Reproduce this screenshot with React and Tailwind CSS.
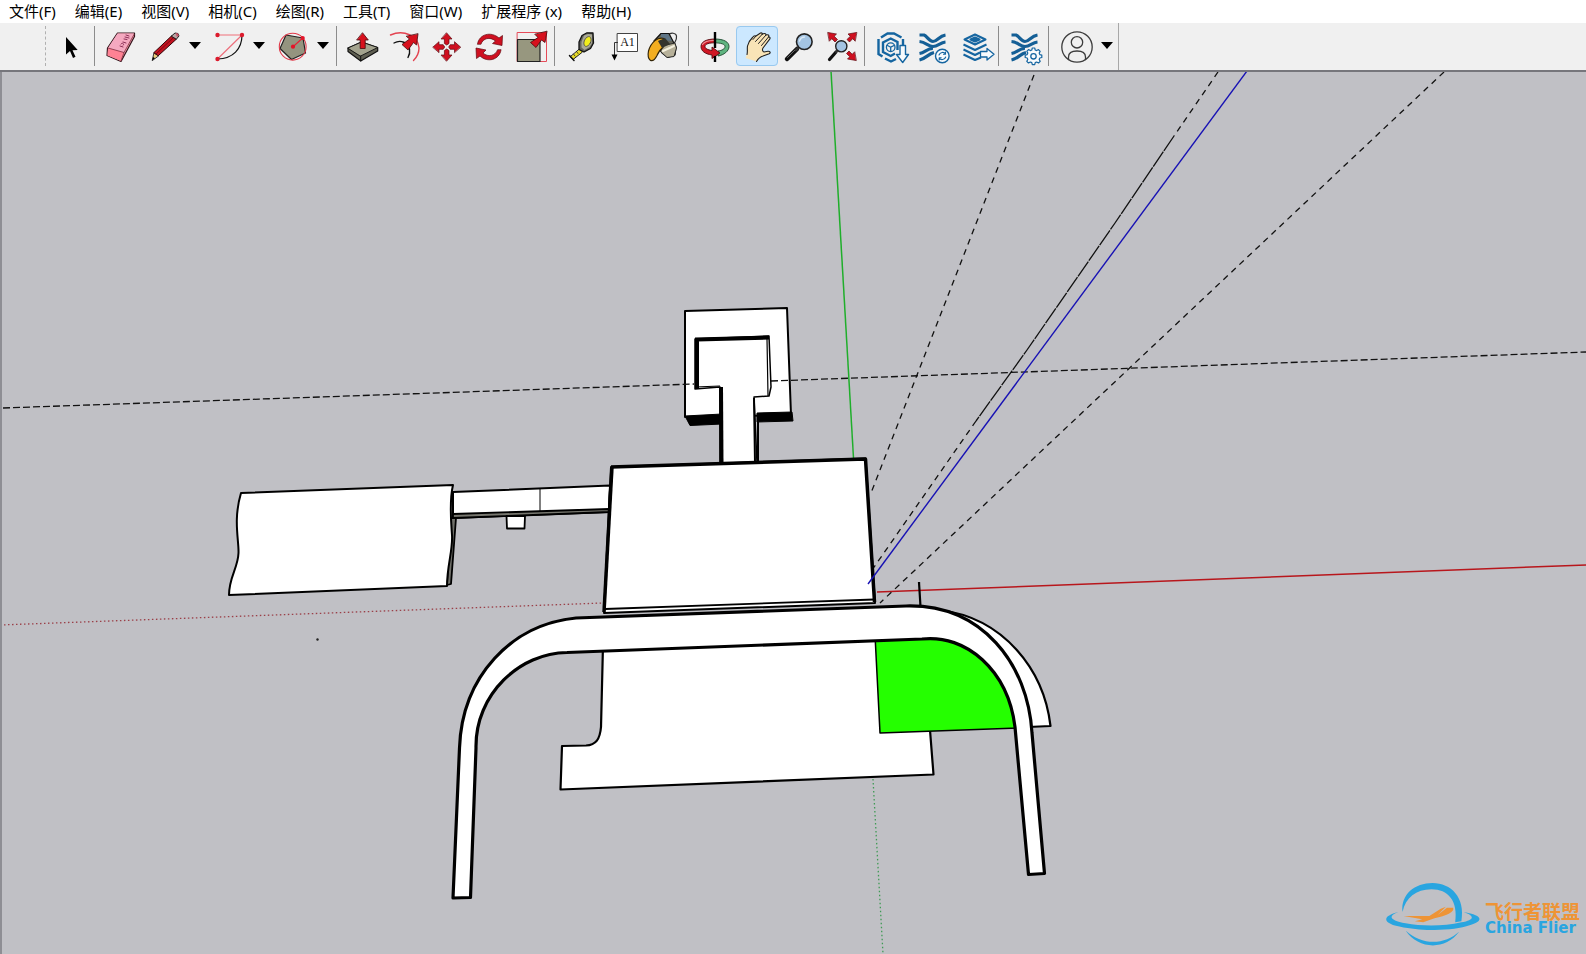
import React from "react";

const menus = [
  "文件(F)",
  "编辑(E)",
  "视图(V)",
  "相机(C)",
  "绘图(R)",
  "工具(T)",
  "窗口(W)",
  "扩展程序 (x)",
  "帮助(H)",
];

// Every toolbar icon is drawn on the same 42x40 grid
function Icon({ children }) {
  return (
    <svg
      viewBox="0 0 42 40"
      className="block h-10 w-[42px]"
      fill="none"
      strokeLinejoin="round"
      strokeLinecap="round"
      aria-hidden="true"
    >
      {children}
    </svg>
  );
}

function SelectIcon() {
  return (
    <Icon>
      <path d="M16 11v17.500l4-3.500 3 7 2.500-1.200-3-6.600 5.200-.2z" fill="#000" />
    </Icon>
  );
}

function EraserIcon() {
  return (
    <Icon>
      <path d="M17.500 7 34.500 7 34.500 10.500 21 35.500 7 29.500 7.500 22z" fill="#f9a0ae" stroke="#33151c" strokeWidth="1.200" />
      <path d="M8 22 17.500 7.500 34 7.500 24 26.500z" fill="#f5a9c0" />
      <path d="M8 22 24 26.500 21 35 7.500 29.500z" fill="#ff8294" />
      <path d="M8 22 24 26.500 34 8.500M24 26.500 21 35" stroke="#7c2e40" strokeWidth=".8" />
      <path d="M20 20l3 1M21 18c1-2 4 0 2 1.500M23 16l3 1M24 13l3 .5M25 11l4 1M26 9l3 1" stroke="#8d3158" strokeWidth="1" />
    </Icon>
  );
}

function PencilIcon() {
  return (
    <Icon>
      <path d="M10.300 34.300 12 26.500 16.500 29.500z" fill="#e8cf7c" stroke="#222" strokeWidth=".9" />
      <path d="M10.300 34.300 11 31 13 32.200z" fill="#000" />
      <path d="M12 26.500 30 9.500 34.500 13 16.500 29.500z" fill="#c1121f" stroke="#320509" strokeWidth="1" />
      <path d="M14 28 32 11" stroke="#7d0711" strokeWidth="1" />
      <path d="M29.500 10 33 7 36 7.500 37 10 34.500 13z" fill="#b9a5a5" stroke="#222" strokeWidth="1" />
      <path d="M33.500 7 36 7.500 36.800 9.500 35 11z" fill="#c95468" />
    </Icon>
  );
}

function ArcIcon() {
  return (
    <Icon>
      <path d="M11.500 9H36" stroke="#f0707b" strokeWidth="1.200" />
      <path d="M36 9 11.500 33" stroke="#ec6f7c" strokeWidth="1.200" />
      <path d="M36 9C36 23 27 32.500 11.500 33" stroke="#111" strokeWidth="1.200" />
      <circle cx="11.500" cy="9" r="2.200" fill="#dc1b2d" />
      <circle cx="36" cy="9" r="2.200" fill="#dc1b2d" />
      <circle cx="11.500" cy="33" r="2.200" fill="#dc1b2d" />
    </Icon>
  );
}

function PolygonIcon() {
  return (
    <Icon>
      <path d="M16 9 33 12 35.500 27 21.500 33.500 10 22.500z" fill="#94947f" stroke="#222" strokeWidth="1.200" />
      <circle cx="22.700" cy="20.700" r="13.400" stroke="#e03a49" strokeWidth="1.100" />
      <path d="M23 20.700 32.700 12" stroke="#e82034" strokeWidth="1.200" />
      <circle cx="23" cy="20.700" r="2.100" fill="#e31429" />
      <circle cx="32.700" cy="12" r="2.100" fill="#e31429" />
    </Icon>
  );
}

function PushPullIcon() {
  return (
    <Icon>
      <path d="M6 22 19.500 16 35.700 21.500 35.700 25 18.700 35 6 25.500z" fill="#5f5f52" stroke="#111" strokeWidth="1.200" />
      <path d="M6 22 19.500 16 35.700 21.500 18.700 30z" fill="#a3a38e" stroke="#111" strokeWidth=".9" />
      <path d="M18.700 30v5" stroke="#111" />
      <path d="M20.700 7 26.300 14 23.200 14 23.200 22.500 18.200 22.500 18.200 14 15 14z" fill="#d7101d" stroke="#47070b" strokeWidth=".8" />
    </Icon>
  );
}

function OffsetIcon() {
  return (
    <Icon>
      <path d="M6.500 9C20 3 34 10 35 22c0 5-2 9-5.500 12.500" stroke="#e34350" strokeWidth="1.400" />
      <path d="M10 17c7-4 14 0 15.500 6 .5 3 0 6-1.500 8.500" stroke="#111" strokeWidth="1.400" />
      <path d="M34 8 32.500 19 29.500 16.500 24 24 18 18.500 25.500 13 22.500 10.500z" fill="#d7101d" stroke="#47070b" strokeWidth=".8" />
    </Icon>
  );
}

function MoveIcon() {
  return (
    <Icon>
      <g fill="#cf1020" stroke="#5e0910" strokeWidth=".7">
        <path d="M20.700 7 26 13 23 13 23 17.500 20.700 19 18.400 17.500 18.400 13 15.400 13z" />
        <path d="M20.700 35 26 29 23 29 23 24.500 20.700 23 18.400 24.500 18.400 29 15.400 29z" />
        <path d="M7 21 13 15.700 13 18.700 17.200 18.700 18.700 21 17.200 23.300 13 23.300 13 26.300z" />
        <path d="M34.500 21 28.500 15.700 28.500 18.700 24.200 18.700 22.700 21 24.200 23.300 28.500 23.300 28.500 26.300z" />
      </g>
    </Icon>
  );
}

function RotateIcon() {
  return (
    <Icon>
      <g fill="#cf1020" stroke="#5e0910" strokeWidth=".7">
        <path d="M9.500 18C11 8 23 5 31 12L34.500 9.500 34 19.500 24.500 17.500 27.500 15C22 10.500 15 12 13 18z" />
        <path d="M33 24C31.500 34 19.500 37 12 30L8.500 32.500 8 22 18 24 15 27C20 31.500 27.500 30 29.500 24z" />
      </g>
    </Icon>
  );
}

function ScaleIcon() {
  return (
    <Icon>
      <path d="M7.500 6.500H36.500V35.500H7.500z" stroke="#e64b59" strokeWidth="1" />
      <path d="M7.500 13.500H30V35.500H7.500z" fill="#97977f" stroke="#222" strokeWidth="1.200" />
      <path d="M37 5.500 35 16.500 31.500 14 26 21.500 20.500 16.500 28 11.500 25 8.500z" fill="#d7101d" stroke="#47070b" strokeWidth=".8" />
    </Icon>
  );
}

function TapeIcon() {
  return (
    <Icon>
      <path d="M20 23 22.500 26 13 33.500 10.500 31z" fill="#e9dc27" stroke="#222" strokeWidth="1" />
      <path d="M9.500 29.500 14 34.500" stroke="#111" strokeWidth="1.500" />
      <path d="M16.500 25.500l1.500 2M13.500 28l1.500 2" stroke="#222" strokeWidth=".8" />
      <path d="M22 9.500 27 6.800 33 7 33.500 17 30.500 22.500 24 26 19 23.500 19 16z" fill="#66665d" stroke="#111" strokeWidth="1.300" />
      <path d="M24 9.500 28 8 32 8.500 32 17 29.500 21 24.500 24 21.500 21.500 21.500 16z" fill="#aaa997" />
      <ellipse cx="27.500" cy="15.500" rx="3.200" ry="5.200" transform="rotate(25 27.500 15.500)" fill="#f2ee1c" stroke="#444" strokeWidth=".7" />
    </Icon>
  );
}

function TextIcon() {
  return (
    <Icon>
      <path d="M15.500 7.500H35.500V25.500H15.500z" fill="#fff" stroke="#444" strokeWidth="1" />
      <path d="M15.500 16.500H12.500V30" stroke="#333" strokeWidth="1" strokeLinejoin="miter" />
      <path d="M9.500 28.500H15.500L12.500 34.500z" fill="#000" />
      <text x="25.500" y="19.500" textAnchor="middle" fontSize="12" fill="#111" fontFamily="'Liberation Serif', serif">
        A1
      </text>
    </Icon>
  );
}

function PaintIcon() {
  return (
    <Icon>
      <path d="M24 9c3-3 8-2 8.500 1 .5 3-1 5-2 7" stroke="#333" strokeWidth="1.200" />
      <path d="M10 15 17 7.500 25 7.500 32 21 31 29 24 31.500 18 27z" fill="#67675b" stroke="#111" strokeWidth="1.200" />
      <path d="M17 8 24 8 28 15 17 14z" fill="#5f7586" />
      <path d="M18 20 31 17 32.500 22 30 30.500 23 31.500 17 26z" fill="#b7b19a" stroke="#222" strokeWidth=".9" />
      <path d="M19 25 30 20" stroke="#f5f1df" strokeWidth="2" />
      <path d="M20 12.500C14 10.500 7 16 4.500 25c-.8 4 0 8 2 9.500 3 1 5-2 6.500-5 1.500-3.500 3-6 6-8z" fill="#f3ae20" stroke="#322407" strokeWidth="1.200" />
      <path d="M14 15 21 12 26 18 18 22z" fill="#34342d" />
    </Icon>
  );
}

function OrbitIcon() {
  return (
    <Icon>
      <path d="M21 13c9 0 14 3 14 7.500S30 29 24 30v-5c4-.5 7-2 7-4.500s-4-3.500-10-3.700z" fill="#5fb480" stroke="#17462a" strokeWidth=".9" />
      <path d="M21 13C12 13 7 16 7 20.500c0 4.500 4 7.500 11 8.500V32.500l8-5.500-8-6v3.500c-4.500-.7-7-2-7-4 0-2.500 4-3.700 10-3.700z" fill="#cf1724" stroke="#520b11" strokeWidth=".9" />
      <path d="M8.500 18.500c2-3 5-4 11-4.200" stroke="#f08b92" strokeWidth="1.200" />
      <path d="M21 6V22M21 30V36" stroke="#000" strokeWidth="2.400" strokeLinecap="butt" />
    </Icon>
  );
}

function HandIcon() {
  return (
    <Icon>
      <path
        d="M9.500 32C12 28 11 24 11.500 20c.5-3 2.500-6 5-8.500 1-1.500 2.500-2 3.500-1.500l4.500-3c1.500-.5 2 .5 1.500 1.500 1.500-1.500 4-1.500 4 .5 2-.8 3.500.2 2.500 2 1.500-.2 2 1 1.200 2.200L27 22c-1 1.500-.5 3.500 1 4l4-.7c2-.2 3 1.500 1.200 2.500L27 30c-3 .7-5 3-6.500 5.500z"
        fill="#f9e4b7"
      />
      <path
        d="M11 28.500c.8-3 0-5.500.5-8.500.5-3 2.500-6 5-8.500 1-1.500 2.500-2 3.500-1.500l4.500-3c1.500-.5 2 .5 1.500 1.500 1.500-1.500 4-1.500 4 .5 2-.8 3.500.2 2.500 2 1.500-.2 2 1 1.200 2.200L27 22c-1 1.500-.5 3.500 1 4l4-.7c2-.2 3 1.500 1.200 2.500L27 30c-3 .7-5 3-6.500 5.500"
        stroke="#222"
        strokeWidth="1.100"
      />
      <path d="M26 8.500 19.500 15.500M30 9 22.500 17.500M32.500 11 25.500 19.500M20 10l-3 3.500" stroke="#222" strokeWidth="1" />
    </Icon>
  );
}

function ZoomIcon() {
  return (
    <Icon>
      <path d="M9 33 19 23" stroke="#111" strokeWidth="4.500" />
      <path d="M9.500 31.500 17 24" stroke="#666" strokeWidth="1" />
      <path d="M18 24 21 21" stroke="#333" strokeWidth="2.500" />
      <circle cx="26.300" cy="15.700" r="7.800" fill="#a4c4e2" stroke="#222" strokeWidth="1.600" />
      <path d="M21.500 15c1-3 3-4 5-4" stroke="#dbeaf6" strokeWidth="1.500" />
    </Icon>
  );
}

function ZoomExtentsIcon() {
  return (
    <Icon>
      <path d="M9.500 33.500 16 26" stroke="#111" strokeWidth="3.200" />
      <path d="M16 26 18 24" stroke="#333" strokeWidth="2" />
      <circle cx="21.300" cy="20.300" r="5.600" fill="#a4c4e2" stroke="#222" strokeWidth="1.400" />
      <g fill="#cf1020" stroke="#5e0910" strokeWidth=".7">
        <path d="M8 6.500 16.500 8 14.200 10.300 17.500 13.500 15 16 11.800 12.700 9.500 15z" />
        <path d="M36.500 6.500 28 8 30.300 10.300 27 13.500 29.500 16 32.700 12.700 35 15z" />
        <path d="M36 34.500 27.500 33 29.800 30.700 26.500 27.500 29 25 32.200 28.300 34.500 26z" />
      </g>
    </Icon>
  );
}

function WarehouseIcon() {
  return (
    <Icon>
      <g stroke="#1565a0" strokeWidth="2.400" strokeLinecap="butt" strokeLinejoin="miter">
        <path d="M11 11.500 17.500 7.500H24L31.500 11.500" />
        <path d="M8.500 13V28L12.500 30.500" />
        <path d="M33 13V20" />
        <path d="M26 33 21 35.500 15 32.500" />
        <path d="M27.500 24V16L20.700 12.500 13 16.500V26L20.700 30 25 27.500" />
      </g>
      <circle cx="20.700" cy="21.200" r="4.300" stroke="#1565a0" strokeWidth="1.300" />
      <path d="M17.500 19.500 20.700 21.200 24 19.500M20.700 21.200V25" stroke="#1565a0" strokeWidth="1.300" />
      <path d="M30 19.500H35.500V28.500H38.500L32.700 36.500 26.500 28.500H30z" fill="#f8fbfd" stroke="#1565a0" strokeWidth="1.400" />
    </Icon>
  );
}

// Woven strands shared by the update and settings tools
function Strands() {
  return (
    <g stroke="#145f96" strokeWidth="3.200" strokeLinecap="butt">
      <path d="M7.500 9H12C15 10 17 15.500 21 15.500S27 10 33.500 9" />
      <path d="M7.500 15.500C14 16 16 20.500 21 20.500S28 16.500 33.500 16" />
      <path d="M7.500 27.500C13 26.500 16 22 21 22.500" />
      <path d="M7.500 34C14 32.500 16 28 22 26.500" />
    </g>
  );
}

function UpdateIcon() {
  return (
    <Icon>
      <Strands />
      <circle cx="30.300" cy="30" r="6.800" fill="#f8fbfd" stroke="#1565a0" strokeWidth="1.400" />
      <path d="M27 29c1-3 5-3.500 6.500-1M33.700 31c-1 3-5 3.500-6.500 1M33.500 26v2.200h-2M27.200 34v-2.200h2" stroke="#1565a0" strokeWidth="1.100" />
    </Icon>
  );
}

function LayersIcon() {
  return (
    <Icon>
      <g stroke="#1565a0" strokeWidth="2" strokeLinecap="butt">
        <path d="M10.500 13.500 21 8.500 31.500 13.500 21 18.500z" />
        <path d="M16.500 13.500 21 11.500 25.500 13.500 21 15.500z" fill="#1565a0" />
        <path d="M9.500 18.500 21 24 32.500 18.500" />
        <path d="M9.500 23.500 21 29 26 26.500" />
        <path d="M9.500 28.500 21 34 27 31.500" />
      </g>
      <path d="M26.500 25.500H33V22.500L40 28.300 33 34V31H26.500z" fill="#f8fbfd" stroke="#1565a0" strokeWidth="1.300" />
    </Icon>
  );
}

function ExtensionSettingsIcon() {
  return (
    <Icon>
      <Strands />
      <path
        d="M28.300 22h2.400l.5 2 1.500.6 1.800-1 1.700 1.700-1 1.800.6 1.500 2 .5v2.400l-2 .5-.6 1.500 1 1.800-1.700 1.700-1.800-1-1.500.6-.5 2h-2.400l-.5-2-1.500-.6-1.800 1-1.700-1.700 1-1.800-.6-1.500-2-.5v-2.400l2-.5.6-1.500-1-1.800 1.700-1.700 1.800 1 1.500-.6z"
        fill="#f8fbfd"
        stroke="#1565a0"
        strokeWidth="1.200"
      />
      <circle cx="29.500" cy="30.300" r="2.700" stroke="#1565a0" strokeWidth="1.300" />
    </Icon>
  );
}

function AccountIcon() {
  return (
    <Icon>
      <g stroke="#3c3c3c" strokeWidth="1.300">
        <circle cx="23" cy="21" r="15.200" />
        <circle cx="23" cy="16.300" r="5.700" />
        <path d="M14.500 33.500v-2.500c0-4 3-6 8.500-6s8.500 2 8.500 6v2.500" />
      </g>
    </Icon>
  );
}

function Tool({ label, icon, menu, active }) {
  return (
    <div className="flex">
      <button
        type="button"
        aria-label={label}
        aria-pressed={active ? true : undefined}
        className={
          active
            ? "rounded-sm bg-[#cce8ff] outline outline-1 -outline-offset-1 outline-[#99c9ef]"
            : "rounded-sm hover:bg-[#e0eefa]"
        }
      >
        {icon}
      </button>
      {menu && (
        <button type="button" aria-label={label + "选项"} className="flex w-[22px] items-center justify-center pb-0.5">
          <svg viewBox="0 0 12 7" className="h-[7px] w-3" aria-hidden="true">
            <path d="M0 0H12L6 7z" fill="#000" />
          </svg>
        </button>
      )}
    </div>
  );
}

function Divider() {
  return (
    <div className="w-2 pl-[2px]">
      <div className="h-10 w-px bg-[#8c8c8c]" />
    </div>
  );
}

function Toolbar() {
  return (
    <div className="flex border-b-2 border-[#76767c] bg-[#f0f0f0]">
      <div role="toolbar" aria-label="工具栏" className="flex border-r border-[#a8a8a8] pt-[3px] pb-1 pl-[45px]">
        <div className="mr-1 w-px border-l border-dashed border-[#b0b0b0]" />
        <Tool label="选择" icon={<SelectIcon />} />
        <Divider />
        <Tool label="擦除" icon={<EraserIcon />} />
        <Tool label="直线" icon={<PencilIcon />} menu />
        <Tool label="圆弧" icon={<ArcIcon />} menu />
        <Tool label="多边形" icon={<PolygonIcon />} menu />
        <Divider />
        <Tool label="推拉" icon={<PushPullIcon />} />
        <Tool label="偏移" icon={<OffsetIcon />} />
        <Tool label="移动" icon={<MoveIcon />} />
        <Tool label="旋转" icon={<RotateIcon />} />
        <Tool label="缩放" icon={<ScaleIcon />} />
        <Divider />
        <Tool label="卷尺" icon={<TapeIcon />} />
        <Tool label="文字" icon={<TextIcon />} />
        <Tool label="颜料桶" icon={<PaintIcon />} />
        <Divider />
        <Tool label="环绕观察" icon={<OrbitIcon />} />
        <Tool label="平移" icon={<HandIcon />} active />
        <Tool label="实时缩放" icon={<ZoomIcon />} />
        <Tool label="缩放范围" icon={<ZoomExtentsIcon />} />
        <Divider />
        <Tool label="模型库" icon={<WarehouseIcon />} />
        <Tool label="扩展更新" icon={<UpdateIcon />} />
        <Tool label="导出图层" icon={<LayersIcon />} />
        <Divider />
        <Tool label="扩展管理" icon={<ExtensionSettingsIcon />} />
        <Divider />
        <Tool label="帐户" icon={<AccountIcon />} menu />
      </div>
    </div>
  );
}

function Model() {
  return (
    <svg viewBox="2 72 1584 881" className="block h-auto w-full" fill="none" strokeLinejoin="round" role="img" aria-label="模型">
      {/* axes behind the solids */}
      <path d="M831 71 853.500 458" stroke="#1fae2b" strokeWidth="1.500" />
      <path d="M877 592 1586 565" stroke="#b8161c" strokeWidth="1.500" />
      <path d="M0 625 603 603" stroke="#9a3f48" strokeWidth="1.300" strokeDasharray="1.500 2.500" />
      <path d="M873 779 883 954" stroke="#3f9a55" strokeWidth="1.300" strokeDasharray="1.500 2.500" />

      {/* guide lines */}
      <g stroke="#111" strokeWidth="1.300">
        <path d="M1034 75 871 493" strokeDasharray="6 5" />
        <path d="M1218 72 1174 136" strokeDasharray="6 5" />
        <path d="M1174 136 1115 223 1027 350 976 421" strokeDasharray="18 1" />
        <path d="M976 421 872 570" strokeDasharray="6 5" />
        <path d="M1444 72 880 603" strokeDasharray="6 5" />
      </g>

      {/* seat back and post */}
      <path d="M685 311 787 308 791 415 685 417z" fill="#fff" stroke="#000" strokeWidth="2" />
      <path d="M685 416 722 414 722 424 690 425.500zM757 413 792 412 793 421 757 422z" fill="#000" stroke="#000" strokeWidth="1" />
      <path d="M3 408 694 384M771 381 1586 352" stroke="#111" strokeWidth="1.300" strokeDasharray="7 3" />
      <path d="M695 339 769 336 771 387 769 396 754 397 757 463 720 463 720 387 695 389z" fill="#fff" stroke="#000" strokeWidth="1.500" />
      <path d="M697 389V339.500L769 337.500" stroke="#000" strokeWidth="4" strokeLinejoin="miter" />
      <path d="M767 339 768 396M695 387 720 386" stroke="#000" strokeWidth="1.200" />
      <path d="M721 387 721.500 463" stroke="#000" strokeWidth="4" />
      <path d="M754 398 755 463M758 422V462" stroke="#000" strokeWidth="2" />

      {/* side box with its arm */}
      <path d="M451 518 456 518 451 584 447 585z" fill="#70706a" stroke="#000" strokeWidth="1.800" />
      <path d="M453 492 610 485.500 609 512 453 518z" fill="#fff" stroke="#000" strokeWidth="2" />
      <path d="M453 514 609 509 609 512 453 518z" fill="#77776f" stroke="#000" strokeWidth="1.800" />
      <path d="M540 489V511" stroke="#000" strokeWidth="1" />
      <path d="M506.500 516H525L524.500 528.500H507z" fill="#fff" stroke="#000" strokeWidth="1.800" />
      <path
        d="M241 493 453 485C449 502 451 520 452 535 453 550 447 566 447 586L229 595C229 577 238 568 238.500 553 239 540 233 520 241 493z"
        fill="#fff"
        stroke="#000"
        strokeWidth="2"
      />

      {/* lower body */}
      <path
        d="M603 645 601 727C600 739 596 745 586 745.500L562 746 560.500 789.500 933.500 774.500 930 730 875 640z"
        fill="#fff"
        stroke="#000"
        strokeWidth="2.200"
      />
      <path d="M940 610C1004 618 1044 670 1050.500 726L1028 727z" fill="#fff" stroke="#000" strokeWidth="2.200" />
      <path d="M875 635 880 733 1018 728C1010 670 970 632 920 632z" fill="#25ff00" stroke="#000" strokeWidth="1.500" />

      {/* main panel */}
      <path d="M611 467 865.500 458.500 875 603 604 613z" fill="#fff" stroke="#000" strokeWidth="2" />
      <path d="M604 612 612 467" stroke="#000" strokeWidth="3.500" />
      <path d="M611 467 865.500 459 874.500 602" stroke="#000" strokeWidth="3.500" />
      <path d="M605 609 874 599.500" stroke="#000" strokeWidth="1.800" />
      <path d="M919 582 920.500 607" stroke="#000" strokeWidth="2.200" />

      {/* tube frame */}
      <path
        d="M453 898 459.500 748C462 676 512 624 576 618L906 606C982 604 1028 664 1032 733L1044.500 873.500 1028.500 874.500 1015 727C1008 670 966 634 922 639L567 652.500C520 653 475 694 476 748L470.500 897.500z"
        fill="#fff"
        stroke="#000"
        strokeWidth="3.200"
      />

      <path d="M1247 71 868 584" stroke="#1711b4" strokeWidth="1.400" />
      <circle cx="317.500" cy="639.500" r="1.200" fill="#222" />
    </svg>
  );
}

function Watermark() {
  return (
    <div className="absolute right-1.5 bottom-2 flex items-end gap-1">
      <svg viewBox="2 1 93 62" className="h-16 w-24" aria-hidden="true">
        <path d="M19 30C17 13 31 2 48 2c18 0 32 14 28 37l-6 1C73 19 63 8 47 8 32 8 22 16 19 30z" fill="#29a5e0" />
        <path d="M22 48c12 18 38 20 52 1-14 13-36 14-52-1z" fill="#29a5e0" />
        <path d="M15 30C-2 34-1 42 20 45c24 4 50 3 64-2 14-4 13-10-6-13 12 4 10 8-2 10-17 4-38 4-54 1C7 38 4 34 15 30z" fill="#29a5e0" />
        <path d="M20 34 45 34 56 27 61 25 53 33 62 26 68 26C70 30 61 34 50 36L39 40 31 39 38 37z" fill="#ee9436" />
      </svg>
      <div className="pb-2.5 font-bold">
        <div className="font-['Noto_Sans_CJK_SC',sans-serif] text-[19px] leading-[19px] text-[#ee9436]">飞行者联盟</div>
        <div className="font-['DejaVu_Sans',sans-serif] text-[15px] leading-4 text-[#29a5e0]">China Flier</div>
      </div>
    </div>
  );
}

function App() {
  return (
    <div className="flex min-h-screen flex-col bg-[#c0c0c5] font-['Noto_Sans','Noto_Sans_CJK_SC',sans-serif]">
      <nav aria-label="菜单" className="flex h-[23px] items-center gap-px bg-white pb-0.5 text-[15px] leading-5 text-black">
        {menus.map((name) => (
          <button key={name} type="button" className="px-[9px] whitespace-nowrap">
            {name}
          </button>
        ))}
      </nav>
      <Toolbar />
      <main className="relative flex-1 border-l-2 border-[#8e8e94]">
        <Model />
        <Watermark />
      </main>
    </div>
  );
}

export default App;
